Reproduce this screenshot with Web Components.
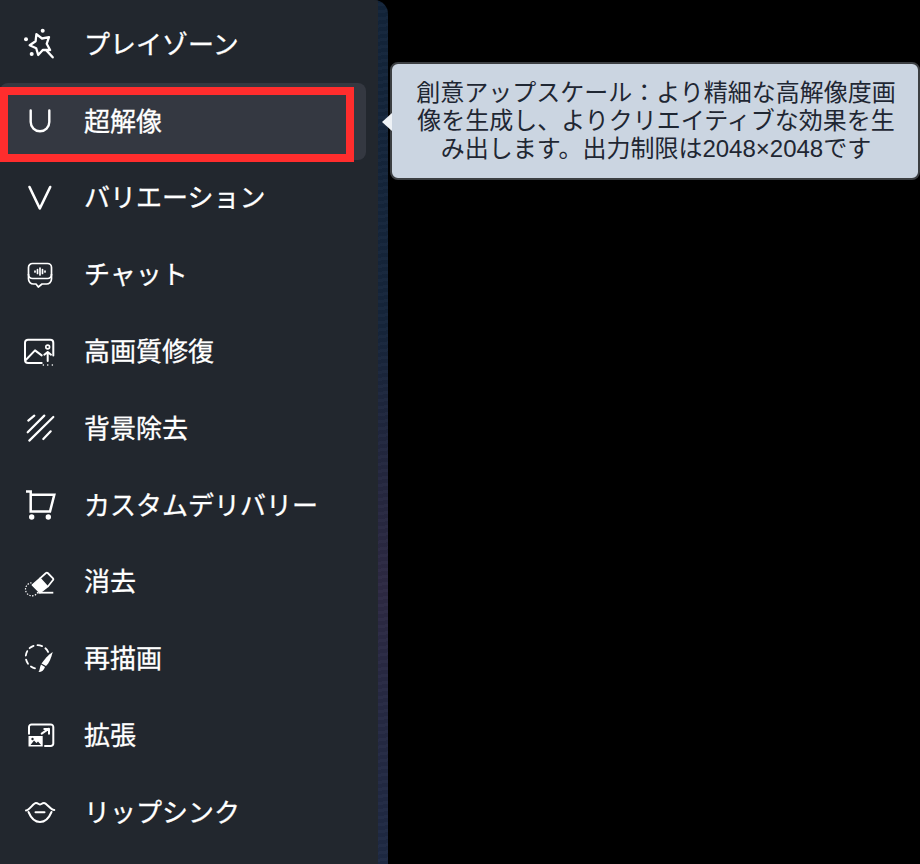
<!DOCTYPE html>
<html lang="ja">
<head>
<meta charset="utf-8">
<style>
html, body { margin: 0; background: #000; }
body { width: 920px; height: 864px; overflow: hidden; font-family: "Liberation Sans", "Noto Sans CJK JP", sans-serif; }
</style>
</head>
<body>
<side-bar>
  <side-item><svg slot="icon" width="32" height="32" viewBox="0 0 32 32" fill="none" stroke="#fff" stroke-width="2.300" stroke-linejoin="round"><path d="M12.400 7.200L18 11.500l7-1.400-2.300 6.700 3.400 6.200-7.100-.2-4.800 5.200-2-6.800-6.500-2.900 5.900-4.100z"/><path d="M22.700 23.700l6 6.600" stroke-width="2.400" stroke-linecap="round"/><circle cx="18.700" cy="3.700" r="2" fill="#fff" stroke="none"/><circle cx="2" cy="12.300" r="2" fill="#fff" stroke="none"/><circle cx="7.700" cy="27" r="2" fill="#fff" stroke="none"/></svg>プレイゾーン</side-item>
  <side-item active><svg slot="icon" width="32" height="32" viewBox="0 0 32 32" fill="none" stroke="#fff" stroke-width="2.400" stroke-linecap="round"><path d="M6.700 6.500V18a9.300 9.300 0 0 0 18.600 0V6.500"/></svg>超解像</side-item>
  <side-item><svg slot="icon" width="32" height="32" viewBox="0 0 32 32" fill="none" stroke="#fff" stroke-width="2.600" stroke-linecap="round" stroke-linejoin="round"><path d="M5.500 6l10.300 21.500L26.200 6"/></svg>バリエーション</side-item>
  <side-item><svg slot="icon" width="32" height="32" viewBox="0 0 32 32" fill="none" stroke="#fff" stroke-width="1.700" stroke-linejoin="round"><rect x="4.500" y="5.500" width="23" height="15" rx="4"/><path d="M4.500 16v5a5 5 0 0 0 5 5h2.500l2.300 3 3.700-3h4.500a5 5 0 0 0 5-5v-5"/><path d="M11 13v1M13.500 11.500v4M16 10v7M18.500 11.500v4M21 13v1" stroke-width="1.700" stroke-linecap="round"/></svg>チャット</side-item>
  <side-item><svg slot="icon" width="32" height="32" viewBox="0 0 32 32" fill="none" stroke="#fff" stroke-width="2" stroke-linecap="round" stroke-linejoin="round"><path d="M17.700 28H4a3 3 0 0 1-3-3V7.700a3 3 0 0 1 3-3h22.300a3 3 0 0 1 3 3v12.700"/><path d="M2 24.700l9-9.300 6.700 5"/><circle cx="23.700" cy="12" r="1.900" stroke-width="1.600"/><path d="M23.700 26v-9M20.300 19.700l3.400-2.700 3.300 2.700"/><path d="M19.300 30h.1M23.700 30h.1M28.300 30h.1" stroke-width="1.500"/></svg>高画質修復</side-item>
  <side-item><svg slot="icon" width="32" height="32" viewBox="0 0 32 32" fill="none" stroke="#fff" stroke-width="2.200" stroke-linecap="round"><path d="M4.300 9.600l6-5M3.700 21.300L20.300 4.600M5.300 29.600L29.300 6M19.300 28l7.400-7.700"/></svg>背景除去</side-item>
  <side-item><svg slot="icon" width="32" height="32" viewBox="0 0 32 32" fill="none" stroke="#fff" stroke-width="2.500"><path d="M2 3.500h4.700v20H26l4.300-16.700H6.700"/><circle cx="7.700" cy="29" r="2.700" fill="#fff" stroke="none"/><circle cx="24.300" cy="29" r="2.700" fill="#fff" stroke="none"/></svg>カスタムデリバリー</side-item>
  <side-item><svg slot="icon" width="32" height="32" viewBox="0 0 32 32" fill="none" stroke="#fff" stroke-width="1.800" stroke-linejoin="round"><path d="M8.300 20L16 13.300l7.700 8.400-7.700 6z" fill="#fff" stroke="#fff" stroke-width="1.500"/><path d="M16 13.300l6-5.300a1.200 1.200 0 0 1 1.700 0l5.300 5.300a1.200 1.200 0 0 1 0 1.700l-5.300 6.700"/><path d="M14.300 27.700h15"/><path d="M7.500 17.800a6.500 6.500 0 1 0 6.500 9" stroke-width="1.200" stroke-dasharray="1.400 1.400"/></svg>消去</side-item>
  <side-item><svg slot="icon" width="32" height="32" viewBox="0 0 32 32" fill="none" stroke="#fff" stroke-width="1.800" stroke-linecap="round"><path d="M11 26.300A11.700 11.700 0 1 1 24.500 11" stroke-dasharray="4.500 4"/><path d="M28.700 10c-1.500 6-3.500 11-6.700 14l-4.500-2.500c2.500-3.500 6.500-8.500 11.200-11.500z" fill="#fff" stroke="none"/><path d="M17 22.500l4 2.500c-1 3-3 5-6.500 5 1.500-2 1-4.500 2.500-7.500z" fill="#fff" stroke="none"/></svg>再描画</side-item>
  <side-item><svg slot="icon" width="32" height="32" viewBox="0 0 32 32" fill="none" stroke="#fff" stroke-width="2" stroke-linecap="round" stroke-linejoin="round"><path d="M5 14.700V8a2.600 2.600 0 0 1 2.600-2.600h19.100a2.600 2.600 0 0 1 2.600 2.600v16.400a2.600 2.600 0 0 1-2.600 2.600H21"/><path d="M17.700 14.700l7.300-5M20.300 10H25v4.700"/><path d="M4.500 17h14.200v10.500H4.500z" fill="#fff" stroke="none"/><path d="M6.500 26l3.500-4.500 2.500 2.500 1.500-1.500 3 3.500z" fill="#22272e" stroke="none"/><circle cx="8.500" cy="20" r="1.200" fill="#22272e" stroke="none"/></svg>拡張</side-item>
  <side-item><svg slot="icon" width="32" height="32" viewBox="0 0 32 32" fill="none" stroke="#fff" stroke-width="2" stroke-linecap="round" stroke-linejoin="round"><path d="M2 15.500C6 15 9 8 12 8c2 0 3 1.600 4 1.600S18 8 20 8c3 0 6 7 10.300 7"/><path d="M4.500 17C7 23 11 27 16 27s9-4 11.500-10"/><path d="M11.500 17.300h9"/></svg>リップシンク</side-item>
</side-bar>
<tip-box>創意アップスケール：より精細な高解像度画像を生成し、よりクリエイティブな効果を生み出します。出力制限は2048×2048です</tip-box>
<mark-box></mark-box>

<script>
class SideBar extends HTMLElement{
    constructor() {
        super();
        this.attachShadow({mode:"open"});
        this.shadowRoot.innerHTML = `
        <style>
        :host {
            display: block;
            width: 388px;
            height: 864px;
            border-top-right-radius: 14px;
            overflow: hidden;
            background:
                repeating-linear-gradient(172deg, rgba(255,255,255,.015) 0 3px, rgba(0,0,0,.05) 3px 7px),
                linear-gradient(180deg, #13253b 0%, #16263c 38%, #252840 55%, #2e2a44 68%, #1e2a44 100%);
        }
        .panel {
            box-sizing: border-box;
            width: 378px;
            height: 100%;
            padding-top: 5px;
            background: #22272e;
            display: flex;
            flex-direction: column;
        }
        </style>
        <div class="panel"><slot></slot></div>`;
    }
}

class SideItem extends HTMLElement{
    constructor() {
        super();
        this.attachShadow({mode:"open"});
        this.shadowRoot.innerHTML = `
        <style>
        :host {
            display: flex;
            align-items: center;
            box-sizing: border-box;
            height: 76.8px;
            margin-right: 12px;
            padding-left: 24px;
            gap: 28px;
            color: #fff;
            font-size: 26px;
            font-weight: 400;
            -webkit-text-stroke: 0.3px #fff;
            border-radius: 8px;
        }
        :host([active]) {
            background: #343841;
            margin-top: 1.400px;
            margin-bottom: -1.400px;
            padding-bottom: 2.800px;
        }
        .icon { display: flex; flex: none; width: 32px; height: 32px; }
        .label { margin-top: -2px; }
        </style>
        <span class="icon"><slot name="icon"></slot></span>
        <span class="label"><slot></slot></span>`;
    }
}

class TipBox extends HTMLElement{
    constructor() {
        super();
        this.attachShadow({mode:"open"});
        this.shadowRoot.innerHTML = `
        <style>
        :host {
            position: absolute;
            left: 390px;
            top: 62px;
            box-sizing: border-box;
            width: 530px;
            height: 118px;
            padding: 15px 19px 0 21px;
            background: #cbd5e1;
            border: 2px solid #3c3f42;
            border-radius: 8px;
            color: #1f2733;
            font-size: 24px;
            line-height: 28px;
            text-align: center;
        }
        .arrow {
            position: absolute;
            left: -10px;
            top: 49px;
            width: 0;
            height: 0;
            border-top: 9px solid transparent;
            border-bottom: 9px solid transparent;
            border-right: 10px solid #eef2f6;
        }
        </style>
        <span class="arrow"></span>
        <slot></slot>`;
    }
}

class MarkBox extends HTMLElement{
    constructor() {
        super();
        this.attachShadow({mode:"open"});
        this.shadowRoot.innerHTML = `
        <style>
        :host {
            position: absolute;
            left: 0;
            top: 87px;
            box-sizing: border-box;
            width: 354px;
            height: 75px;
            border: 8px solid #ff2d2d;
        }
        </style>`;
    }
}

customElements.define("side-bar", SideBar);
customElements.define("side-item", SideItem);
customElements.define("tip-box", TipBox);
customElements.define("mark-box", MarkBox);
</script>
</body>
</html>
